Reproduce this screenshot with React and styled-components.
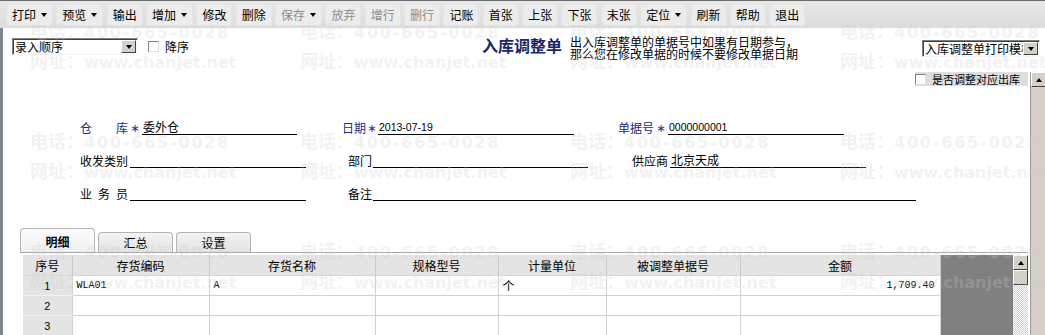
import React from "react";
import styled, { createGlobalStyle } from "styled-components";

const GlobalStyle = createGlobalStyle`
  html, body { margin: 0; padding: 0; background: #fff; }
  body {
    font-family: "Noto Sans CJK SC", "Liberation Sans", sans-serif;
    font-size: 12px;
    color: #000;
  }
`;

const Window = styled.div`
  position: relative;
  width: 1045px;
  height: 335px;
  overflow: hidden;
  display: flex;
  flex-direction: column;
  background: #fff;
`;

const Toolbar = styled.div`
  display: flex;
  align-items: center;
  gap: 3.33px;
  height: 28px;
  flex-shrink: 0;
  padding-left: 6px;
  box-sizing: border-box;
  border-top: 1px solid #6b6b6b;
  background: linear-gradient(#e8e8e8, #dcdcdc);
`;

const ToolButton = styled.div`
  display: flex;
  align-items: center;
  height: 22px;
  padding: 0 5px;
  box-sizing: border-box;
  border: 1px solid #e4e4e4;
  border-radius: 2px;
  background: #ececec;
  line-height: 20px;
  white-space: nowrap;
  color: ${({ $disabled }) => ($disabled ? "#8c8c8c" : "#000")};
`;

const Caret = styled.span`
  margin-left: 5px;
  width: 0;
  height: 0;
  border-left: 3.5px solid transparent;
  border-right: 3.5px solid transparent;
  border-top: 4px solid #000;
`;

const Body = styled.div`
  flex: 1;
  display: flex;
  flex-direction: column;
  border-left: 3px solid #7f8690;
  min-height: 0;
`;

const HeadRow = styled.div`
  display: flex;
  align-items: flex-start;
  height: 44px;
  flex-shrink: 0;
  padding: 8px 5px 0 9px;
  box-sizing: border-box;
`;

const SortGroup = styled.div`
  display: flex;
  align-items: center;
  width: 470px;
  margin-top: 2px;
  gap: 6px;
`;

const Select = styled.div`
  display: flex;
  align-items: center;
  justify-content: space-between;
  width: ${({ $w }) => $w}px;
  height: 17px;
  box-sizing: border-box;
  margin-top: ${({ $top }) => $top || 0}px;
  margin-left: ${({ $auto }) => ($auto ? "auto" : "0")};
  border: 1px solid;
  border-color: #808080 #f4f4f4 #f4f4f4 #808080;
  box-shadow: inset 1px 1px 0 #404040;
  background: #fff;
  padding-left: 2px;
  overflow: hidden;
  white-space: nowrap;
  line-height: 15px;
`;

const SelectText = styled.span`
  overflow: hidden;
  flex: 1;
`;

const DropBtn = styled.span`
  display: flex;
  align-items: center;
  justify-content: center;
  width: 15px;
  height: 13px;
  flex-shrink: 0;
  box-sizing: border-box;
  margin-right: 1px;
  background: #d4d0c8;
  border: 1px solid;
  border-color: #fff #404040 #404040 #fff;

  &::after {
    content: "";
    border-left: 3.5px solid transparent;
    border-right: 3.5px solid transparent;
    border-${({ $up }) => ($up ? "bottom" : "top")}: 4px solid #000;
  }
`;

const Check = styled.span`
  display: inline-block;
  width: 11px;
  height: 11px;
  box-sizing: border-box;
  flex-shrink: 0;
  margin-left: 4px;
  background: #fff;
  border: 1px solid;
  border-color: #808080 #e0e0e0 #e0e0e0 #808080;
`;

const Title = styled.div`
  margin-top: 1px;
  font-size: 16px;
  font-weight: bold;
  line-height: 17px;
  color: #14296b;
  white-space: nowrap;
`;

const Note = styled.div`
  margin-left: 8px;
  line-height: 12px;
  white-space: nowrap;
`;

const Lower = styled.div`
  flex: 1;
  display: flex;
  min-height: 0;
`;

const Main = styled.div`
  flex: 1;
  display: flex;
  flex-direction: column;
  min-width: 0;
`;

const OptionRow = styled.div`
  display: flex;
  justify-content: flex-end;
  height: 14px;
  padding-right: 2px;
`;

const OptionLabel = styled.div`
  display: flex;
  align-items: center;
  gap: 6px;
  padding-right: 8px;
  background: #dedede;
  font-size: 11px;
  line-height: 14px;
  white-space: nowrap;

  ${Check} {
    margin-left: 0;
  }
`;

const FormGrid = styled.div`
  display: grid;
  grid-template-columns: 262px 276px 1fr;
  grid-auto-rows: 33px;
  margin-top: 16px;
  padding-left: 77px;
`;

const Field = styled.div`
  display: flex;
  align-items: flex-end;
  padding-left: ${({ $indent }) => $indent || 0}px;
  grid-column: ${({ $span }) => ($span ? "span 2" : "auto")};
`;

const Label = styled.span`
  line-height: 14px;
  white-space: nowrap;
  color: ${({ $required }) => ($required ? "#1b2a80" : "#000")};
  ${({ $justify }) => $justify && "width: 48px; text-align-last: justify;"}
`;

const Star = styled.span`
  width: ${({ $w }) => $w}px;
  text-align: center;
  line-height: 12px;
  color: #1b2a80;
  font-family: "DejaVu Sans", sans-serif;
  font-size: 11px;
`;

const Value = styled.div`
  width: ${({ $w }) => $w}px;
  height: 14px;
  margin-left: ${({ $gap }) => $gap || 0}px;
  padding-left: 1px;
  box-sizing: content-box;
  line-height: 14px;
  border-bottom: 1px solid #000;
  white-space: nowrap;
  font-family: ${({ $num }) =>
    $num ? '"Liberation Sans", sans-serif' : '"Noto Sans CJK SC", sans-serif'};
  font-size: ${({ $num }) => ($num ? "10.5px" : "12px")};
`;

const TabBar = styled.div`
  display: flex;
  align-items: flex-end;
  gap: 3px;
  height: 24px;
  margin-top: 27px;
  padding-left: 17px;
`;

const Tab = styled.div`
  width: 75px;
  height: ${({ $active }) => ($active ? 24 : 20)}px;
  box-sizing: border-box;
  padding-top: ${({ $active }) => ($active ? 6 : 3)}px;
  text-align: center;
  line-height: 14px;
  font-weight: ${({ $active }) => ($active ? "bold" : "normal")};
  border: 1px solid #b4b4b4;
  border-bottom: none;
  border-radius: 4px 4px 0 0;
  background: ${({ $active }) =>
    $active ? "linear-gradient(#fbfbfb, #f1f1f1)" : "linear-gradient(#f4f4f4, #e2e2e2)"};
`;

const Panel = styled.div`
  flex: 1;
  display: flex;
  margin: 0 2px 0 17px;
  padding: 2px 0 0 3px;
  border-top: 1px solid #a8a8a8;
  min-height: 0;
`;

const Table = styled.table`
  width: 917px;
  flex-shrink: 0;
  border-collapse: collapse;
  table-layout: fixed;
`;

const Th = styled.th`
  height: 20px;
  padding: 0;
  background: #e4e4e4;
  font-weight: normal;
  text-align: center;
  border-right: 1px solid #c9c9c9;
  border-bottom: 1px solid #d6d6d6;
  white-space: nowrap;
`;

const Td = styled.td`
  height: 19px;
  padding: 0 ${({ $align }) => ($align === "right" ? 5 : 4)}px 0 4px;
  border-right: 1px solid #d2d2d2;
  border-bottom: 1px solid #d2d2d2;
  text-align: ${({ $align }) => $align || "left"};
  white-space: nowrap;
  font-family: ${({ $num }) =>
    $num ? '"Liberation Mono", monospace' : '"Noto Sans CJK SC", sans-serif'};
  font-size: ${({ $num }) => ($num ? "10px" : "12px")};
`;

const RowHead = styled(Td)`
  background: #e4e4e4;
  text-align: center;
  border-bottom-color: #f2f2f2;
  font-family: "Liberation Sans", sans-serif;
  font-size: 11px;
`;

const DarkFill = styled.div`
  flex: 1;
  background: #808080;
`;

const ScrollBar = styled.div`
  width: 15px;
  flex-shrink: 0;
  display: flex;
  flex-direction: column;
  background: ${({ $dither }) =>
    $dither ? "repeating-conic-gradient(#d4d0c8 0 25%, #fff 0 50%) 0 0 / 2px 2px" : "#d4d0c8"};
  ${({ $edge }) => $edge && "border-left: 1px solid #9a9a9a; box-sizing: border-box;"}
`;

const ScrollBtn = styled(DropBtn)`
  width: 15px;
  height: 15px;
  margin: 0;
  ${({ $thumb }) => $thumb && "&::after { display: none; }"}
`;

const Watermark = styled.div`
  position: absolute;
  inset: 0;
  pointer-events: none;
  display: grid;
  grid-template-columns: repeat(4, 270px);
  grid-auto-rows: 110px;
  padding: 15px 0 0 30px;
  color: rgba(205, 205, 205, 0.26);
  font-weight: bold;
`;

const MarkLine = styled.div`
  height: 30px;
  line-height: 30px;
  white-space: nowrap;
  font-size: 18px;
`;

const MarkLatin = styled.span`
  font-family: "DejaVu Sans", sans-serif;
  font-size: 16px;
  letter-spacing: ${({ $ls }) => $ls || 0}px;
`;

const tools = [
  { t: "打印", caret: true },
  { t: "预览", caret: true },
  { t: "输出" },
  { t: "增加", caret: true },
  { t: "修改" },
  { t: "删除" },
  { t: "保存", caret: true, off: true },
  { t: "放弃", off: true },
  { t: "增行", off: true },
  { t: "删行", off: true },
  { t: "记账" },
  { t: "首张" },
  { t: "上张" },
  { t: "下张" },
  { t: "末张" },
  { t: "定位", caret: true },
  { t: "刷新" },
  { t: "帮助" },
  { t: "退出" },
];

const columns = [
  ["序号", 49],
  ["存货编码", 137],
  ["存货名称", 166],
  ["规格型号", 123],
  ["计量单位", 108],
  ["被调整单据号", 134],
  ["金额", 200],
];

const rows = [
  ["1", "WLA01", "A", "", "个", "", "1,709.40"],
  ["2", "", "", "", "", "", ""],
  ["3", "", "", "", "", "", ""],
];

export default function App() {
  return (
    <>
      <GlobalStyle />
      <Window>
        <Toolbar>
          {tools.map((b) => (
            <ToolButton key={b.t} $disabled={b.off}>
              {b.t}
              {b.caret && <Caret />}
            </ToolButton>
          ))}
        </Toolbar>

        <Body>
          <HeadRow>
            <SortGroup>
              <Select $w={126}>
                <SelectText>录入顺序</SelectText>
                <DropBtn />
              </Select>
              <Check />
              <span>降序</span>
            </SortGroup>
            <Title>入库调整单</Title>
            <Note>
              出入库调整单的单据号中如果有日期参与，
              <br />
              那么您在修改单据的时候不要修改单据日期
            </Note>
            <Select $w={118} $top={4} $auto>
              <SelectText>入库调整单打印模板</SelectText>
              <DropBtn />
            </Select>
          </HeadRow>

          <Lower>
            <Main>
              <OptionRow>
                <OptionLabel>
                  <Check />
                  是否调整对应出库
                </OptionLabel>
              </OptionRow>

              <FormGrid>
                <Field>
                  <Label $required $justify>仓库</Label>
                  <Star $w={14}>∗</Star>
                  <Value $w={154}>委外仓</Value>
                </Field>
                <Field>
                  <Label $required>日期</Label>
                  <Star $w={12}>∗</Star>
                  <Value $w={195} $num>2013-07-19</Value>
                </Field>
                <Field>
                  <Label $required>单据号</Label>
                  <Star $w={14}>∗</Star>
                  <Value $w={175} $num>0000000001</Value>
                </Field>

                <Field>
                  <Label>收发类别</Label>
                  <Value $w={175} $gap={2} />
                </Field>
                <Field $indent={6}>
                  <Label>部门</Label>
                  <Value $w={214} $gap={1} />
                </Field>
                <Field $indent={14}>
                  <Label>供应商</Label>
                  <Value $w={195} $gap={2}>北京天成</Value>
                </Field>

                <Field>
                  <Label $justify>业务员</Label>
                  <Value $w={175} $gap={2} />
                </Field>
                <Field $indent={6} $span>
                  <Label>备注</Label>
                  <Value $w={542} $gap={1} />
                </Field>
              </FormGrid>

              <TabBar>
                <Tab $active>明细</Tab>
                <Tab>汇总</Tab>
                <Tab>设置</Tab>
              </TabBar>

              <Panel>
                <Table>
                  <colgroup>
                    {columns.map(([name, w]) => (
                      <col key={name} style={{ width: w }} />
                    ))}
                  </colgroup>
                  <thead>
                    <tr>
                      {columns.map(([name]) => (
                        <Th key={name}>{name}</Th>
                      ))}
                    </tr>
                  </thead>
                  <tbody>
                    {rows.map((r) => (
                      <tr key={r[0]}>
                        <RowHead>{r[0]}</RowHead>
                        <Td $num>{r[1]}</Td>
                        <Td $num>{r[2]}</Td>
                        <Td>{r[3]}</Td>
                        <Td>{r[4]}</Td>
                        <Td>{r[5]}</Td>
                        <Td $num $align="right">{r[6]}</Td>
                      </tr>
                    ))}
                  </tbody>
                </Table>
                <DarkFill />
                <ScrollBar $dither>
                  <ScrollBtn $up />
                  <ScrollBtn $thumb />
                </ScrollBar>
              </Panel>
            </Main>
            <ScrollBar $edge>
              <ScrollBtn $up />
            </ScrollBar>
          </Lower>
        </Body>

        <Watermark>
          {Array.from({ length: 12 }).map((_, i) => (
            <div key={i}>
              <MarkLine>
                电话：<MarkLatin $ls={1.8}>400-665-0028</MarkLatin>
              </MarkLine>
              <MarkLine>
                网址：<MarkLatin>www.chanjet.net</MarkLatin>
              </MarkLine>
            </div>
          ))}
        </Watermark>
      </Window>
    </>
  );
}
